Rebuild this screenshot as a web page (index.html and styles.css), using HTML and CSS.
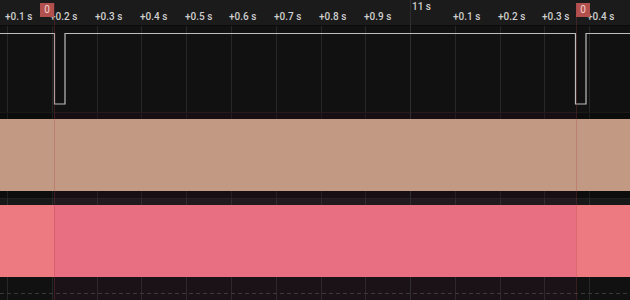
FILE: index.html
```html
<!DOCTYPE html>
<html>
<head>
<meta charset="utf-8">
<link rel="stylesheet" href="styles.css">
</head>
<body>
<div class="viewer">
  <div class="ruler">
    <span class="tick" style="left:5px">+0.1 s</span>
    <span class="tick" style="left:50px">+0.2 s</span>
    <span class="tick" style="left:95px">+0.3 s</span>
    <span class="tick" style="left:140px">+0.4 s</span>
    <span class="tick" style="left:185px">+0.5 s</span>
    <span class="tick" style="left:229px">+0.6 s</span>
    <span class="tick" style="left:274px">+0.7 s</span>
    <span class="tick" style="left:319px">+0.8 s</span>
    <span class="tick" style="left:364px">+0.9 s</span>
    <span class="major-label" style="left:412px">11 s</span>
    <span class="tick" style="left:453px">+0.1 s</span>
    <span class="tick" style="left:498px">+0.2 s</span>
    <span class="tick" style="left:542px">+0.3 s</span>
    <span class="tick" style="left:587px">+0.4 s</span>
    <span class="flag" style="left:40px">0</span>
    <span class="flag" style="left:576px">0</span>
  </div>
  <div class="tracks">
    <div class="grid">
      <i class="gl" style="left:7px"></i>
      <i class="gl" style="left:52px"></i>
      <i class="gl" style="left:97px"></i>
      <i class="gl" style="left:141px"></i>
      <i class="gl" style="left:186px"></i>
      <i class="gl" style="left:231px"></i>
      <i class="gl" style="left:276px"></i>
      <i class="gl" style="left:321px"></i>
      <i class="gl" style="left:365px"></i>
      <i class="gl" style="left:455px"></i>
      <i class="gl" style="left:500px"></i>
      <i class="gl" style="left:544px"></i>
      <i class="gl" style="left:589px"></i>
    </div>
    <div class="track signal">
      <svg width="630" height="86" viewBox="0 0 630 86">
        <polyline points="0,7.5 54.5,7.5 54.5,78 65,78 65,7.5 575.5,7.5 575.5,78 586,78 586,7.5 630,7.5" fill="none" stroke="#bdbdbd" stroke-width="1.2"/>
      </svg>
    </div>
    <div class="gap gap-a"></div>
    <div class="track bar peach"></div>
    <div class="gap gap-b">
      <div class="gap-half top"></div>
      <div class="gap-half bottom"></div>
    </div>
    <div class="track bar pink">
      <div class="seg seg-edge" style="width:54px"></div>
      <div class="seg seg-mid" style="width:522px"></div>
      <div class="seg seg-edge seg-fill"></div>
    </div>
    <div class="gap gap-c">
      <div class="dashes"></div>
    </div>
    <div class="range" style="left:54px;width:522px"></div>
  </div>
  <div class="major-line" style="left:410px"></div>
  <div class="marker-line" style="left:54px"></div>
  <div class="marker-line" style="left:576px"></div>
</div>
</body>
</html>
```
FILE: styles.css
```css
html, body {
  margin: 0;
  padding: 0;
  background: #111111;
}
.viewer {
  position: relative;
  width: 630px;
  height: 300px;
  overflow: hidden;
  display: flex;
  flex-direction: column;
  font-family: Roboto, "Liberation Sans", sans-serif;
}
.ruler {
  position: relative;
  height: 25px;
  flex: none;
  background: #1b1b1b;
  border-bottom: 1px solid #0b0b0b;
}
.tick {
  position: absolute;
  top: 11px;
  font-size: 10px;
  line-height: 12px;
  font-weight: 500;
  color: #cfcfcf;
  white-space: nowrap;
}
.major-label {
  position: absolute;
  top: 1px;
  font-size: 10px;
  line-height: 12px;
  font-weight: 500;
  color: #cfcfcf;
}
.flag {
  position: absolute;
  top: 3px;
  width: 14px;
  height: 14px;
  background: #b2504e;
  color: #f3d6d4;
  font-size: 10px;
  line-height: 13px;
  text-align: center;
  z-index: 3;
}
.tracks {
  position: relative;
  flex: 1;
  display: flex;
  flex-direction: column;
}
.grid {
  position: absolute;
  inset: 0;
  z-index: 0;
}
.gl {
  position: absolute;
  top: 0;
  bottom: 0;
  width: 1px;
  background: #272727;
}
.track, .gap {
  position: relative;
  flex: none;
}
.signal {
  height: 86px;
  z-index: 1;
}
.signal svg {
  display: block;
}
.gap-a {
  height: 7px;
  background: rgba(0, 0, 0, 0.25);
  border-top: 1px solid #191919;
  box-sizing: border-box;
}
.bar {
  height: 72px;
  z-index: 1;
}
.peach {
  background: #c29a83;
}
.gap-b {
  height: 14px;
  display: flex;
  flex-direction: column;
}
.gap-half {
  flex: 1;
}
.gap-half.top {
  background: rgba(0, 0, 0, 0.2);
  border-bottom: 1px solid #202020;
}
.gap-half.bottom {
  background: rgba(255, 255, 255, 0.03);
}
.pink {
  display: flex;
}
.seg {
  height: 100%;
}
.seg-edge {
  background: #ee7a81;
}
.seg-mid {
  background: #e86e82;
}
.seg-fill {
  flex: 1;
}
.gap-c {
  flex: 1;
}
.dashes {
  position: absolute;
  left: 0;
  right: 0;
  top: 16px;
  height: 1px;
  background: repeating-linear-gradient(90deg, #383838 0 4px, transparent 4px 7px);
}
.range {
  position: absolute;
  top: 86px;
  bottom: 0;
  background: rgba(160, 40, 110, 0.07);
  z-index: 0;
  pointer-events: none;
}
.major-line {
  position: absolute;
  top: 0;
  bottom: 0;
  width: 1px;
  background: #2e2e2e;
  z-index: 0;
}
.marker-line {
  position: absolute;
  top: 3px;
  bottom: 0;
  width: 1px;
  background: rgba(170, 60, 75, 0.28);
  z-index: 4;
}
```
